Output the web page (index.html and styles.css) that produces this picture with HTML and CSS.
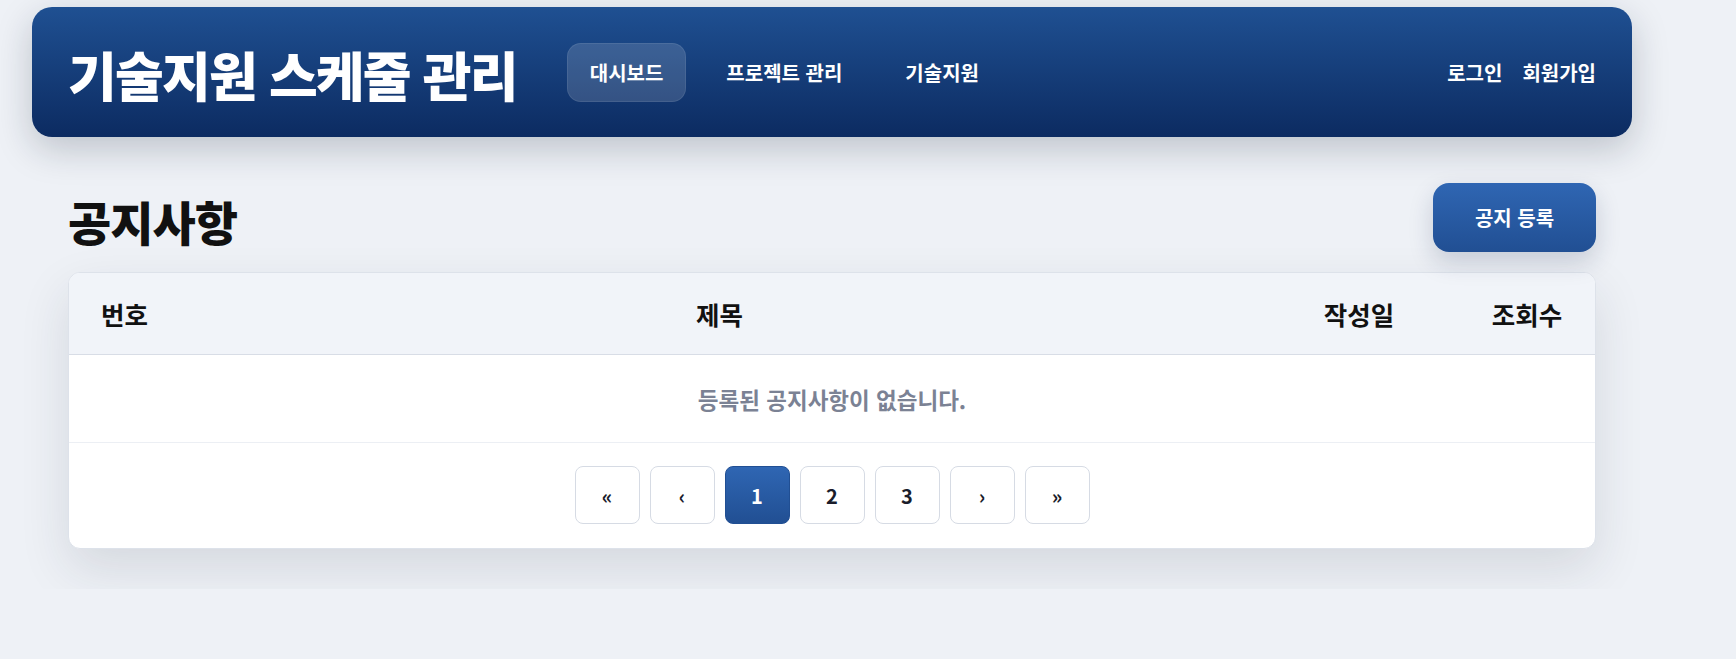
FILE: index.html
```html
<!DOCTYPE html>
<html lang="ko">
<head>
<meta charset="utf-8">
<title>공지사항 - 기술지원 스케줄 관리</title>
<link rel="stylesheet" href="styles.css">
</head>
<body>
<div class="page">
  <header class="header">
    <div class="brand">기술지원 스케줄 관리</div>
    <nav class="nav">
      <a class="nav-link active">대시보드</a>
      <a class="nav-link">프로젝트 관리</a>
      <a class="nav-link">기술지원</a>
    </nav>
    <div class="auth">
      <a class="auth-link">로그인</a>
      <a class="auth-link">회원가입</a>
    </div>
  </header>
  <main class="main">
    <div class="title-row">
      <h1 class="title">공지사항</h1>
      <button class="primary-btn">공지 등록</button>
    </div>
    <section class="card">
      <div class="thead">
        <div class="th">번호</div>
        <div class="th">제목</div>
        <div class="th">작성일</div>
        <div class="th">조회수</div>
      </div>
      <div class="empty">등록된 공지사항이 없습니다.</div>
      <div class="pager">
        <button class="page-btn">«</button>
        <button class="page-btn">‹</button>
        <button class="page-btn current">1</button>
        <button class="page-btn">2</button>
        <button class="page-btn">3</button>
        <button class="page-btn">›</button>
        <button class="page-btn">»</button>
      </div>
    </section>
  </main>
</div>
</body>
</html>
```
FILE: styles.css
```css
* { box-sizing: border-box; }
html, body { margin: 0; }
body {
  background: #eef1f6;
  font-family: "Noto Sans CJK KR", "Noto Sans", sans-serif;
  color: #111;
}
.page {
  width: 1664px;
  padding: 7px 32px 40px;
}
.header {
  height: 130px;
  padding: 0 36px;
  display: flex;
  align-items: center;
  border-radius: 20px;
  background: linear-gradient(180deg, #1f5092 0%, #0c2b61 100%);
  box-shadow: 0 12px 36px rgba(20, 30, 50, 0.22);
  color: #fff;
}
.brand {
  font-size: 53px;
  font-weight: 800;
  letter-spacing: -1.8px;
  line-height: 1;
  margin-right: 50px;
  margin-top: 4px;
}
.nav { display: flex; gap: 17px; }
.nav-link {
  display: block;
  height: 59px;
  line-height: 57px;
  padding: 0 22px;
  border-radius: 14px;
  font-size: 20px;
  font-weight: 700;
  color: #fff;
  border: 1px solid transparent;
}
.nav-link.active {
  background: rgba(255, 255, 255, 0.15);
  border-color: rgba(255, 255, 255, 0.08);
}
.auth { margin-left: auto; display: flex; gap: 20px; }
.auth-link { font-size: 20px; font-weight: 700; color: #fff; }
.main { padding: 46px 36px 0; }
.title-row {
  display: flex;
  align-items: center;
  justify-content: space-between;
  margin-bottom: 20px;
}
.title {
  margin: 0;
  font-size: 47px;
  font-weight: 800;
  letter-spacing: -1px;
  line-height: 1;
  margin-top: 6px;
}
.primary-btn {
  height: 69px;
  width: 163px;
  border: 0;
  border-radius: 16px;
  background: linear-gradient(180deg, #2f66b3 0%, #214f93 100%);
  color: #fff;
  font-family: inherit;
  font-size: 20px;
  font-weight: 700;
  box-shadow: 0 10px 24px rgba(20, 40, 80, 0.18);
}
.card {
  background: #fff;
  border: 1px solid #dde2ea;
  border-radius: 12px;
  overflow: hidden;
  box-shadow: 0 20px 50px rgba(30, 40, 60, 0.12);
}
.thead {
  display: grid;
  grid-template-columns: 111px 1fr 200px 136px;
  height: 82px;
  align-items: center;
  background: #f1f4f9;
  border-bottom: 1px solid #d8dde6;
}
.th {
  text-align: center;
  font-size: 25.5px;
  font-weight: 700;
  color: #111;
}
.empty {
  height: 88px;
  display: flex;
  align-items: center;
  justify-content: center;
  font-size: 22.5px;
  font-weight: 700;
  color: #7b8294;
  border-bottom: 1px solid #eceff4;
}
.pager {
  display: flex;
  justify-content: center;
  gap: 10px;
  padding: 23px 0 24px;
}
.page-btn {
  width: 65px;
  height: 58px;
  border: 1px solid #d6dbe4;
  border-radius: 8px;
  background: #fff;
  color: #1a1d2b;
  font-family: inherit;
  font-size: 20px;
  font-weight: 700;
}
.page-btn.current {
  background: linear-gradient(180deg, #2f66b3 0%, #214f93 100%);
  border-color: #214f93;
  color: #fff;
}
```
